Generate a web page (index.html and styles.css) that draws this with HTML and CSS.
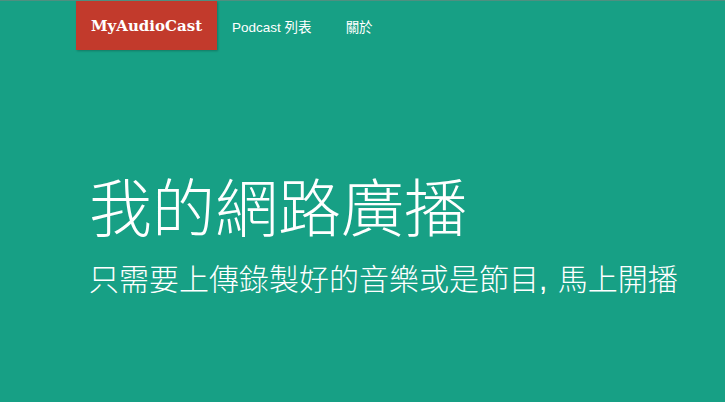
FILE: index.html
```html
<!DOCTYPE html>
<html lang="zh-Hant">
<head>
<meta charset="utf-8">
<title>MyAudioCast</title>
<link rel="stylesheet" href="styles.css">
</head>
<body>
<header class="topbar">
  <nav class="nav">
    <a class="brand" href="#">MyAudioCast</a>
    <a class="nav-link" href="#">Podcast 列表</a>
    <a class="nav-link" href="#">關於</a>
  </nav>
</header>
<main class="hero">
  <h1 class="hero-title">我的網路廣播</h1>
  <p class="hero-lead">只需要上傳錄製好的音樂或是節目<span class="comma">, </span>馬上開播</p>
</main>
</body>
</html>
```
FILE: styles.css
```css
html, body {
  margin: 0;
  padding: 0;
  height: 100%;
}
body {
  background: #17a085;
  color: #ffffff;
  font-family: "Liberation Sans", Arial, "Noto Sans CJK TC", sans-serif;
  border-top: 1px solid #4f8f80;
  box-sizing: border-box;
}
.topbar {
  padding-left: 76px;
}
.nav {
  display: flex;
  align-items: center;
  height: 49px;
}
.brand {
  display: flex;
  align-items: center;
  height: 100%;
  padding: 0 15px;
  background: #c23a2c;
  color: #fff;
  text-decoration: none;
  font-family: "DejaVu Serif", "Liberation Serif", serif;
  font-weight: bold;
  font-size: 15px;
  letter-spacing: 0;
  box-shadow: 1px 1px 2px rgba(0,0,0,0.25);
}
.nav-link {
  color: #fff;
  text-decoration: none;
  font-size: 13.5px;
  margin-left: 15px;
}
.nav-link + .nav-link {
  margin-left: 34px;
}
.hero {
  padding: 119px 0 0 89px;
}
.hero-title {
  margin: 0;
  font-family: "Noto Sans CJK TC", sans-serif;
  font-weight: 300;
  font-size: 63px;
  line-height: 1.1;
}
.hero-lead {
  margin: 20px 0 0;
  font-family: "Noto Sans CJK TC", sans-serif;
  font-weight: 300;
  font-size: 30px;
  line-height: 1.3;
}
.comma {
  font-family: "Liberation Sans", Arial, sans-serif;
  margin-right: 2px;
}
```
